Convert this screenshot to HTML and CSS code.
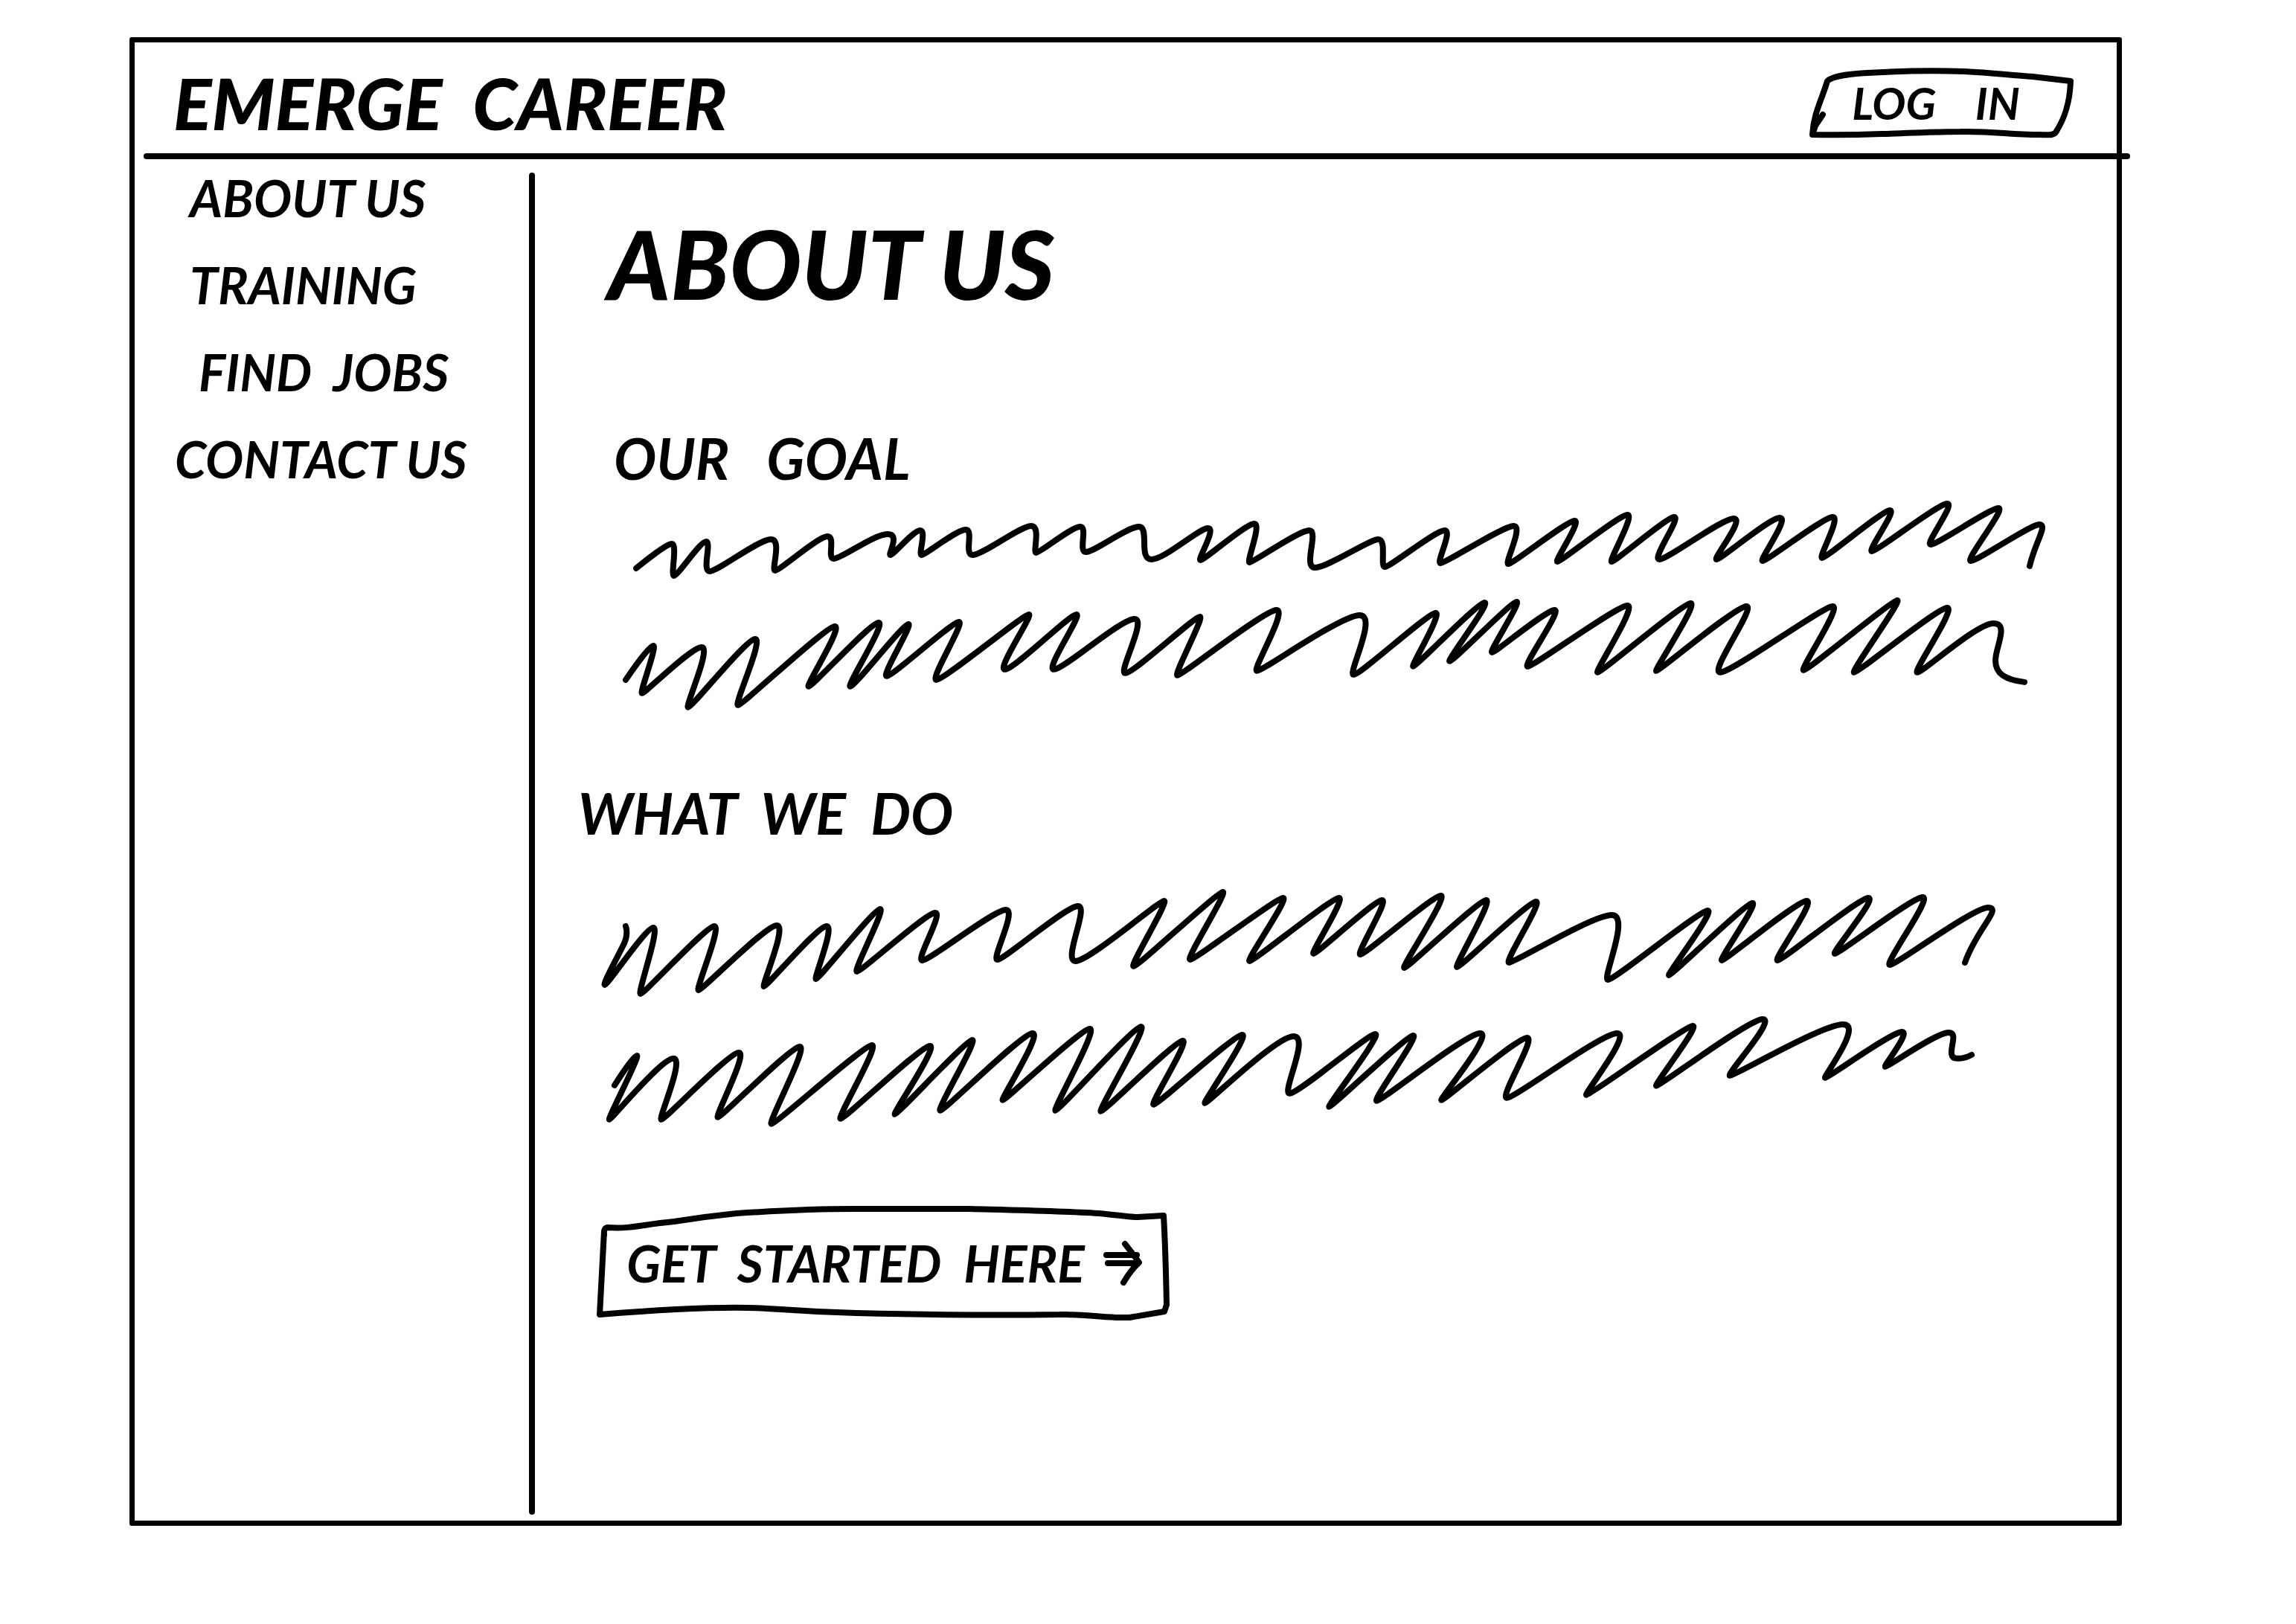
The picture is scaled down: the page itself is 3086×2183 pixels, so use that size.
FILE: index.html
```html
<!DOCTYPE html>
<html lang="en">
<head>
<meta charset="utf-8">
<meta name="viewport" content="width=device-width, initial-scale=1">
<title>Emerge Career</title>
<link rel="stylesheet" href="styles.css">
</head>
<body>
<div class="frame">
  <header class="header">
    <a class="brand" href="#">EMERGE&nbsp; CAREER</a>
    <button class="sketch-button login" type="button">
      <svg class="outline" viewBox="2432 88 356 98" preserveAspectRatio="none" aria-hidden="true">
        <path d="M2450 153L2440 168L2436 180C2438 150 2448 135 2456 108C2462 101 2490 98 2510 97C2560 94 2610 94 2640 95C2680 97 2700 100 2732 102L2783 108C2782 140 2774 160 2763 177C2759 182 2750 180 2741 180C2700 180 2680 175 2635 176C2600 176 2570 178 2529 179Q2480 181 2436 180"/>
      </svg>
      <span>LOG&nbsp;&nbsp;&nbsp; IN</span>
    </button>
  </header>
  <hr class="rule">
  <div class="body">
    <nav class="nav" aria-label="Main">
      <a class="inset" href="#">ABOUT US</a>
      <a class="inset" href="#">TRAINING</a>
      <a class="inset-more" href="#">FIND&nbsp; JOBS</a>
      <a href="#">CONTACT US</a>
    </nav>
    <hr class="divider">
    <main class="main">
      <h1>ABOUT US</h1>
      <section>
        <h2 class="inset-heading">OUR&nbsp;&nbsp; GOAL</h2>
        <svg class="scribble" viewBox="800 660 2000 320" role="img" aria-label="Paragraph about our goal">
          <path d="M854 764S894 731 902 731S900 774 905 774S940 728 948 728S942 768 953 768S1019 725 1035 725S1035 767 1041 767S1099 721 1111 721S1110 751 1120 751S1174 718 1192 718S1192 746 1196 746S1227 713 1236 713S1233 746 1238 746S1285 712 1297 712S1294 746 1307 746S1371 707 1385 707S1387 743 1392 743S1440 708 1451 708S1448 742 1459 742S1515 708 1530 708S1529 752 1547 752S1611 710 1623 710S1608 753 1613 753S1674 704 1685 704S1674 756 1679 756S1745 713 1759 713S1750 763 1767 763S1840 725 1852 725S1854 762 1861 762S1929 713 1941 713S1929 757 1936 757S2020 707 2034 707S2021 758 2027 758S2106 700 2116 700S2088 755 2093 755S2176 692 2187 692S2161 755 2166 755S2240 695 2250 695S2219 752 2230 752S2314 697 2330 697S2301 752 2307 752S2378 696 2392 696S2363 754 2369 754S2451 695 2463 695S2443 750 2449 750S2530 686 2540 686S2509 741 2516 741S2605 677 2617 677S2586 732 2595 732S2675 683 2686 683S2640 754 2649 754S2729 705 2741 705S2735 730 2728 761"/>
          <path d="M840 914S871 868 877 868S858 932 862 932S928 870 942 870S919 951 924 951S1002 859 1014 859S985 948 991 948S1109 842 1121 842S1081 923 1086 923S1169 837 1180 837S1136 923 1142 923S1213 839 1220 839S1183 909 1191 909S1279 836 1288 836S1248 914 1258 914S1375 826 1382 826S1338 900 1350 900S1437 826 1446 826S1403 900 1416 900S1506 832 1524 832S1501 905 1512 905S1605 829 1612 829S1576 908 1582 908S1699 820 1715 820S1681 902 1689 902S1802 827 1827 827S1810 907 1819 907S1919 824 1929 824S1895 896 1899 896S1986 810 1995 810S1943 889 1948 889S2031 809 2038 809S2000 877 2005 877S2078 820 2089 820S2045 896 2053 896S2173 814 2187 814S2142 904 2147 904S2261 811 2272 811S2222 902 2226 902S2333 815 2347 815S2296 904 2312 904S2450 815 2463 815S2418 901 2424 901S2543 807 2550 807S2486 904 2492 904S2604 817 2617 817S2570 904 2577 904S2657 838 2679 838S2682 870 2682 888S2696 914 2721 917"/>
        </svg>
      </section>
      <section>
        <h2>WHAT&nbsp; WE&nbsp; DO</h2>
        <svg class="scribble" viewBox="800 1170 2000 370" role="img" aria-label="Paragraph about what we do">
          <path d="M840 1245S844 1255 838 1268S808 1324 812 1324S867 1247 877 1247S855 1336 860 1336S948 1245 959 1245S933 1331 938 1331S1028 1244 1043 1244S1022 1326 1026 1326S1098 1245 1110 1245S1092 1316 1096 1316S1174 1222 1182 1222S1145 1306 1151 1306S1244 1227 1256 1227S1229 1291 1239 1291S1335 1223 1351 1223S1331 1290 1340 1290S1432 1218 1448 1218S1427 1292 1445 1292S1557 1211 1564 1211S1517 1299 1523 1299S1636 1199 1643 1199S1592 1290 1599 1290S1715 1207 1724 1207S1673 1292 1679 1292S1789 1207 1799 1207S1760 1282 1765 1282S1847 1210 1857 1210S1821 1283 1828 1283S1925 1204 1936 1204S1882 1301 1887 1301S1987 1210 1997 1210S1953 1300 1958 1300S2054 1212 2064 1212S2020 1294 2028 1294S2140 1230 2166 1230S2152 1317 2161 1317S2284 1224 2295 1224S2239 1311 2243 1311S2346 1214 2355 1214S2309 1291 2314 1291S2415 1211 2428 1211S2382 1291 2389 1291S2498 1207 2511 1207S2460 1282 2466 1282S2570 1206 2584 1206S2531 1297 2540 1297S2652 1220 2672 1220S2656 1250 2641 1294"/>
          <path d="M825 1459S850 1419 855 1419S815 1505 818 1505S888 1423 904 1423S883 1505 888 1505S979 1415 992 1415S959 1502 964 1502S1062 1407 1074 1407S1030 1511 1036 1511S1160 1405 1171 1405S1123 1504 1129 1504S1237 1406 1249 1406S1198 1498 1202 1498S1298 1398 1306 1398S1257 1493 1263 1493S1373 1389 1387 1389S1343 1479 1347 1479S1452 1383 1464 1383S1413 1493 1418 1493S1523 1380 1533 1380S1474 1494 1479 1494S1579 1399 1589 1399S1544 1485 1550 1485S1658 1391 1669 1391S1615 1483 1619 1483S1715 1393 1738 1393S1721 1470 1733 1470S1838 1390 1848 1390S1782 1488 1786 1488S1890 1392 1899 1392S1843 1480 1850 1480S1970 1389 1989 1389S1933 1479 1937 1479S2039 1395 2052 1395S2014 1476 2025 1476S2152 1389 2173 1389S2127 1472 2132 1472S2265 1379 2275 1379S2221 1460 2226 1460S2350 1370 2369 1370S2318 1446 2325 1446S2449 1377 2477 1377S2449 1449 2453 1449S2543 1387 2556 1387S2530 1434 2534 1434S2602 1388 2619 1388S2611 1423 2631 1423Q2641 1423 2650 1418"/>
        </svg>
      </section>
      <button class="sketch-button start" type="button">
        <svg class="outline" viewBox="800 1620 776 156" preserveAspectRatio="none" aria-hidden="true">
          <path d="M811 1660Q810 1650 816 1650C850 1652 860 1646 905 1642C930 1638 950 1635 989 1631C1050 1627 1100 1625 1146 1625H1303C1380 1627 1430 1628 1476 1631C1500 1633 1515 1636 1528 1636L1563 1634C1565 1670 1566 1700 1567 1754L1564 1763L1517 1771H1499C1470 1770 1450 1766 1423 1767C1350 1768 1230 1767 1150 1765C1060 1763 1040 1758 1005 1758C950 1757 880 1761 805 1767L811 1655"/>
        </svg>
        <span>GET&nbsp; STARTED&nbsp; HERE</span>
        <svg class="arrow" viewBox="1487 1674 54 64" aria-hidden="true">
          <path d="M1492 1695H1533M1494 1706H1535M1517 1680Q1525 1690 1536 1705Q1525 1715 1515 1732"/>
        </svg>
      </button>
    </main>
  </div>
</div>
</body>
</html>
```
FILE: styles.css
```css
* {
  box-sizing: border-box;
}

body {
  margin: 0;
  padding: 50px 234px 132px 174px;
  background: #fff;
  color: #000;
  font-family: Lato, "Liberation Sans", sans-serif;
  font-style: italic;
  font-weight: 700;
}

a {
  color: inherit;
  text-decoration: none;
}

h1,
h2,
hr {
  margin: 0;
}

svg {
  display: block;
  overflow: visible;
  fill: none;
  stroke: #000;
  stroke-width: 8;
  stroke-linecap: round;
  stroke-linejoin: round;
}

.frame {
  display: flex;
  flex-direction: column;
  min-height: calc(100vh - 182px);
  border: 7px solid #000;
  border-radius: 3px;
}

.header {
  display: flex;
  align-items: center;
  justify-content: space-between;
  height: 149px;
  padding: 12px 57px 0 52px;
}

.brand {
  font-size: 96px;
  font-weight: 900;
  line-height: 100px;
}

.rule {
  height: 8px;
  margin: 0 -18px 0 12px;
  border: 0;
  border-radius: 4px;
  background: #000;
}

.sketch-button {
  position: relative;
  display: flex;
  align-items: center;
  justify-content: center;
  padding: 0;
  border: 0;
  background: none;
  color: inherit;
  font: inherit;
}

.outline {
  position: absolute;
  inset: 0;
  width: 100%;
  height: 100%;
}

.login {
  width: 356px;
  height: 98px;
  padding-right: 16px;
  font-size: 60px;
  line-height: 60px;
}

.body {
  display: grid;
  grid-template-columns: 530px 8px 1fr;
  flex: 1;
}

.nav {
  display: flex;
  flex-direction: column;
  gap: 53px;
  padding: 20px 0 0 54px;
  font-size: 68px;
  line-height: 64px;
}

.inset {
  padding-left: 20px;
}

.inset-more {
  padding-left: 32px;
}

.divider {
  height: auto;
  margin: 18px 0 8px;
  border: 0;
  border-radius: 4px;
  background: #000;
}

.main {
  padding: 70px 45px 0 58px;
}

h1 {
  padding-left: 40px;
  font-size: 128px;
  font-weight: 900;
  line-height: 140px;
}

h2 {
  font-size: 76px;
  line-height: 80px;
}

.inset-heading {
  padding-left: 48px;
}

h1 + section {
  margin-top: 152px;
}

.scribble {
  width: calc(100% - 24px);
  margin: 4px 0 0 24px;
}

section + section {
  margin-top: 73px;
}

section + section .scribble {
  margin-top: 37px;
}

.start {
  gap: 24px;
  width: 776px;
  height: 156px;
  margin: 80px 0 0 24px;
  font-size: 68px;
  line-height: 80px;
}

.arrow {
  width: 54px;
  height: 64px;
}
```
